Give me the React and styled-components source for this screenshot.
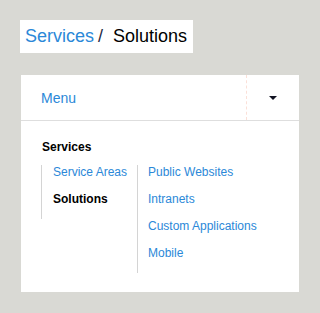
import React from 'react';
import styled, { createGlobalStyle } from 'styled-components';

const GlobalStyle = createGlobalStyle`
  html, body {
    margin: 0;
    padding: 0;
    background: #d9d9d4;
    font-family: "Liberation Sans", Arial, sans-serif;
  }
`;

const Page = styled.div`
  padding: 20px 21px 20px 20px;
`;

const Breadcrumb = styled.div`
  display: inline-flex;
  align-items: center;
  height: 33px;
  padding: 0 6px 0 5px;
  background: #fff;
  font-size: 18px;
  white-space: pre;
`;

const Crumb = styled.a`
  color: ${({ current }) => (current ? '#000' : '#2b88d8')};
  text-decoration: none;
`;

const Divider = styled.span`
  color: #1f2a44;
  margin: 0 10px 0 4px;
`;

const Card = styled.div`
  width: 278px;
  margin: 22px 0 0 1px;
  background: #fff;
`;

const Header = styled.div`
  display: flex;
  height: 45px;
  border-bottom: 1px solid #dedede;
`;

const MenuLink = styled.a`
  flex: 1;
  display: flex;
  align-items: center;
  padding-left: 20px;
  font-size: 14px;
  color: #2b88d8;
  text-decoration: none;
`;

const Toggle = styled.button`
  width: 53px;
  border: none;
  border-left: 1px dashed #fbe0d8;
  background: transparent;
  display: flex;
  align-items: center;
  justify-content: center;
  padding: 0;
`;

const Caret = styled.span`
  width: 0;
  height: 0;
  border-left: 4px solid transparent;
  border-right: 4px solid transparent;
  border-top: 4px solid #111322;
`;

const Body = styled.div`
  padding: 19px 20px 19px 20px;
`;

const Heading = styled.div`
  padding-left: 1px;
  font-size: 12px;
  line-height: 15px;
  font-weight: bold;
  color: #000;
  margin-bottom: 10px;
`;

const SubNav = styled.div`
  display: flex;
  align-items: flex-start;
`;

const Column = styled.ul`
  list-style: none;
  margin: 0;
  padding: 0 0 0 ${({ indent }) => indent}px;
  width: ${({ width }) => width || 'auto'};
  box-sizing: border-box;
  border-left: 1px solid #d4d4d4;
`;

const Item = styled.li`
  font-size: 12px;
  line-height: 15px;
  margin-bottom: 12px;
  font-weight: ${({ active }) => (active ? 'bold' : 'normal')};
  color: ${({ active }) => (active ? '#000' : '#2b88d8')};
`;

const areas = ['Service Areas', 'Solutions'];
const solutions = ['Public Websites', 'Intranets', 'Custom Applications', 'Mobile'];

const App = () => (
  <Page>
    <GlobalStyle />
    <Breadcrumb>
      <Crumb href="#">Services</Crumb>
      <Divider>/</Divider>
      <Crumb current>Solutions</Crumb>
    </Breadcrumb>
    <Card>
      <Header>
        <MenuLink href="#">Menu</MenuLink>
        <Toggle aria-label="Toggle menu">
          <Caret />
        </Toggle>
      </Header>
      <Body>
        <Heading>Services</Heading>
        <SubNav>
          <Column indent={11} width="96px">
            {areas.map((a) => (
              <Item key={a} active={a === 'Solutions'}>
                {a}
              </Item>
            ))}
          </Column>
          <Column indent={10}>
            {solutions.map((s) => (
              <Item key={s}>{s}</Item>
            ))}
          </Column>
        </SubNav>
      </Body>
    </Card>
  </Page>
);

export default App;
